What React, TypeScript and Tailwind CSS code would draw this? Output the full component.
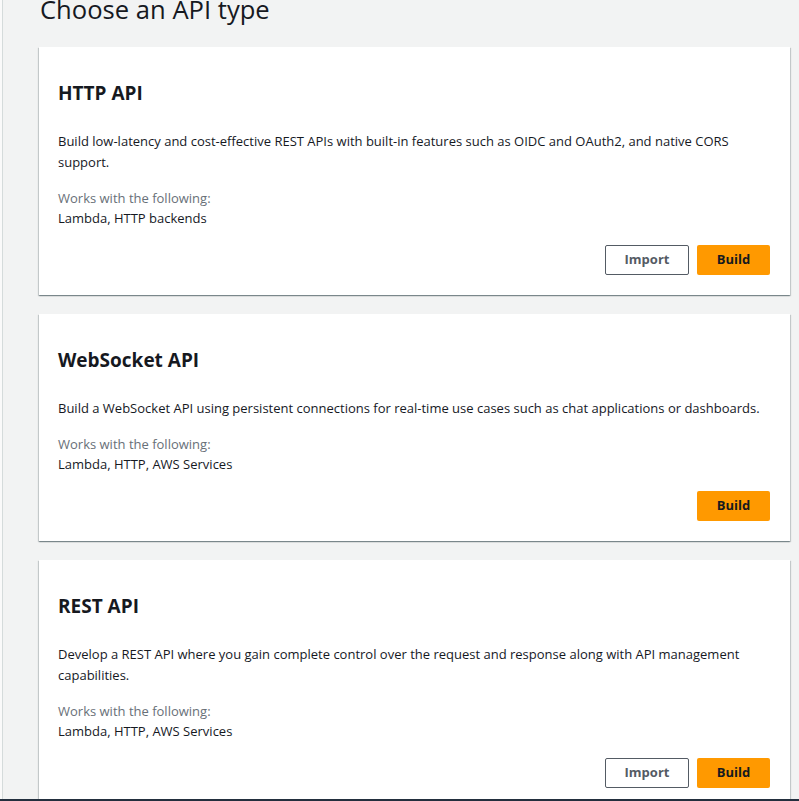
import React from "react";

type Card = {
  title: string;
  desc: string;
  works: string;
  importBtn: boolean;
};

const cards: Card[] = [
  {
    title: "HTTP API",
    desc: "Build low-latency and cost-effective REST APIs with built-in features such as OIDC and OAuth2, and native CORS support.",
    works: "Lambda, HTTP backends",
    importBtn: true,
  },
  {
    title: "WebSocket API",
    desc: "Build a WebSocket API using persistent connections for real-time use cases such as chat applications or dashboards.",
    works: "Lambda, HTTP, AWS Services",
    importBtn: false,
  },
  {
    title: "REST API",
    desc: "Develop a REST API where you gain complete control over the request and response along with API management capabilities.",
    works: "Lambda, HTTP, AWS Services",
    importBtn: true,
  },
];

function ApiCard({ card }: { card: Card }) {
  return (
    <div className="bg-white shrink-0 pt-[34px] pb-[20px] pl-[19px] pr-[20px] shadow-[0_1px_1px_0_rgba(0,28,36,0.3),1px_1px_1px_0_rgba(0,28,36,0.15),-1px_1px_1px_0_rgba(0,28,36,0.15)]">
      <h2 className="text-[19px] leading-[24px] font-bold text-[#16191f]">{card.title}</h2>
      <p className="mt-[26px] text-[13px] leading-[21px] text-[#16191f]">{card.desc}</p>
      <div className="mt-[15px] text-[13px] leading-[20px] text-[#687078]">Works with the following:</div>
      <div className="text-[13px] leading-[20px] text-[#16191f]">{card.works}</div>
      <div className="mt-[17px] flex justify-end gap-[8px]">
        {card.importBtn && (
          <button className="h-[30px] w-[84px] rounded-[2px] border border-[#545b64] bg-white text-[13px] font-bold text-[#545b64]">
            Import
          </button>
        )}
        <button className="h-[30px] w-[73px] rounded-[2px] bg-[#ff9900] text-[13px] font-bold text-[#16191f]">
          Build
        </button>
      </div>
    </div>
  );
}

export default function App() {
  return (
    <div
      className="h-[801px] w-full overflow-hidden flex flex-col bg-[#f2f3f3]"
      style={{ fontFamily: '"Open Sans", "Noto Sans", Arial, sans-serif' }}
    >
      <div className="flex-1 flex overflow-hidden">
        <div className="w-[2px] bg-[#fafafa] shrink-0" />
        <div className="w-[1px] bg-[#d5dbdb] shrink-0" />
        <div className="flex-1 pl-[36px] pr-[9px] flex flex-col overflow-hidden">
          <h1 className="-mt-[8px] mb-[19px] text-[25.6px] leading-[36px] font-normal text-[#16191f] pl-[1px] shrink-0">
            Choose an API type
          </h1>
          <div className="flex flex-col gap-[19px]">
            {cards.map((c) => (
              <ApiCard key={c.title} card={c} />
            ))}
          </div>
        </div>
      </div>
      <div className="h-[2px] bg-[#232f3e] shrink-0" />
    </div>
  );
}
